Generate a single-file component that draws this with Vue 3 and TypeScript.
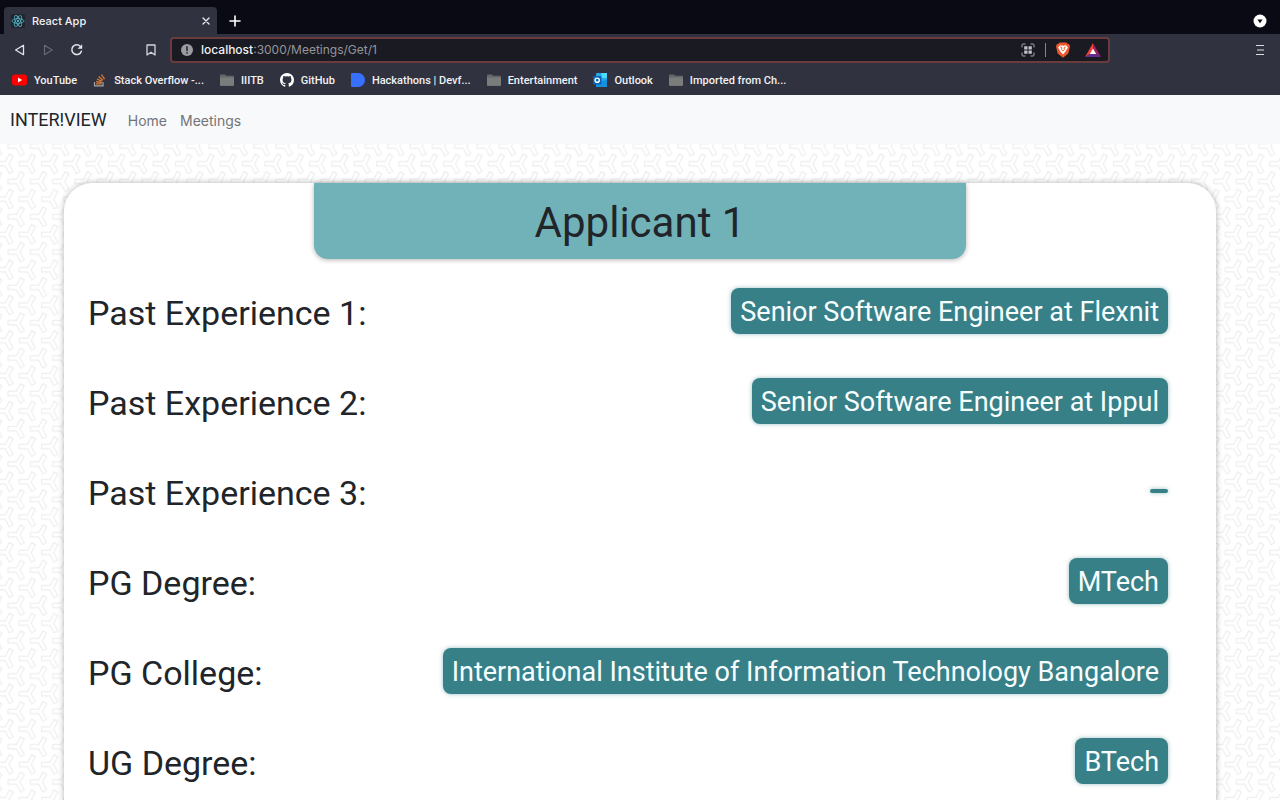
<script setup lang="ts">
interface Bookmark {
  label: string
  icon: 'youtube' | 'stack' | 'folder' | 'github' | 'devfolio' | 'outlook'
}

interface Detail {
  label: string
  value: string
}

const bookmarks: Bookmark[] = [
  { label: 'YouTube', icon: 'youtube' },
  { label: 'Stack Overflow -...', icon: 'stack' },
  { label: 'IIITB', icon: 'folder' },
  { label: 'GitHub', icon: 'github' },
  { label: 'Hackathons | Devf...', icon: 'devfolio' },
  { label: 'Entertainment', icon: 'folder' },
  { label: 'Outlook', icon: 'outlook' },
  { label: 'Imported from Ch...', icon: 'folder' },
]

const details: Detail[] = [
  { label: 'Past Experience 1:', value: 'Senior Software Engineer at Flexnit' },
  { label: 'Past Experience 2:', value: 'Senior Software Engineer at Ippul' },
  { label: 'Past Experience 3:', value: '' },
  { label: 'PG Degree:', value: 'MTech' },
  { label: 'PG College:', value: 'International Institute of Information Technology Bangalore' },
  { label: 'UG Degree:', value: 'BTech' },
]
</script>

<template>
  <div class="screen">
    <header class="browser">
      <div class="tabs">
        <div class="tab">
          <svg class="favicon" viewBox="0 0 14 14" aria-hidden="true">
            <rect width="14" height="14" rx="2" fill="#20242c" />
            <g fill="none" stroke="#4fa9bd" stroke-width="0.9">
              <ellipse cx="7" cy="7" rx="6" ry="2.4" />
              <ellipse cx="7" cy="7" rx="6" ry="2.4" transform="rotate(60 7 7)" />
              <ellipse cx="7" cy="7" rx="6" ry="2.4" transform="rotate(120 7 7)" />
            </g>
            <circle cx="7" cy="7" r="1.2" fill="#4fa9bd" />
          </svg>
          <span class="tab-title">React App</span>
          <button class="icon-button" aria-label="Close tab">
            <svg width="8" height="8" viewBox="0 0 8 8"><path d="M1 1l6 6M7 1L1 7" stroke="#e8e9ee" stroke-width="1.4" stroke-linecap="round" /></svg>
          </button>
        </div>
        <button class="icon-button" aria-label="New tab">
          <svg width="12" height="12" viewBox="0 0 12 12"><path d="M6 1v10M1 6h10" stroke="#fff" stroke-width="1.6" stroke-linecap="round" /></svg>
        </button>
        <button class="icon-button tab-search" aria-label="Search tabs">
          <svg width="14" height="14" viewBox="0 0 14 14"><circle cx="7" cy="7" r="6.5" fill="#fff" /><path d="M4.4 5.4h5.2L7 9.2z" fill="#0b0b16" /></svg>
        </button>
      </div>

      <div class="toolbar">
        <button class="icon-button" aria-label="Back">
          <svg width="12" height="12" viewBox="0 0 12 12"><path d="M9.5 1.3v9.4L1.6 6z" fill="none" stroke="#e4e5ea" stroke-width="1.3" stroke-linejoin="round" /></svg>
        </button>
        <button class="icon-button" aria-label="Forward">
          <svg width="12" height="12" viewBox="0 0 12 12"><path d="M2.5 1.3v9.4L10.2 6z" fill="none" stroke="#666975" stroke-width="1.2" stroke-linejoin="round" /></svg>
        </button>
        <button class="icon-button" aria-label="Reload">
          <svg width="14" height="14" viewBox="0 0 14 14"><path d="M10.200 3.200A4.900 4.900 0 1 0 11.400 8.200" fill="none" stroke="#e4e5ea" stroke-width="1.500" stroke-linecap="round" /><path d="M12.200 1.200v4.600H7.600z" fill="#e4e5ea" /></svg>
        </button>
        <button class="icon-button bookmark" aria-label="Bookmark this page">
          <svg width="10" height="12" viewBox="0 0 10 12"><path d="M1 1h8v10L5 8.2 1 11z" fill="none" stroke="#d4d5db" stroke-width="1.3" stroke-linejoin="round" /></svg>
        </button>
        <div class="address">
          <svg width="12" height="12" viewBox="0 0 12 12" aria-hidden="true"><circle cx="6" cy="6" r="6" fill="#9a9ca1" /><path d="M6 2.8v3.8" stroke="#1b1b22" stroke-width="1.4" stroke-linecap="round" /><circle cx="6" cy="8.9" r="0.8" fill="#1b1b22" /></svg>
          <a class="url" href="#"><b>localhost</b>:3000/Meetings/Get/1</a>
          <div class="actions">
            <button class="icon-button" aria-label="QR code">
              <svg width="14" height="14" viewBox="0 0 14 14">
                <path d="M1 4.500V2q0-1 1-1h2.500M9.500 1H12q1 0 1 1v2.500M13 9.500V12q0 1-1 1H9.500M4.500 13H2q-1 0-1-1V9.500" fill="none" stroke="#a6a7ac" />
                <path d="M3.200 3.200h3.300v3.300H3.200zM7.500 3.200h3.300v3.300H7.500zM3.200 7.500h3.300v3.300H3.200zM7.500 7.500h3.300v3.300H7.500z" fill="#c2c3c7" />
              </svg>
            </button>
            <span class="divider"></span>
            <button class="icon-button" aria-label="Brave Shields">
              <svg width="14" height="16" viewBox="0 0 14 16"><path d="M3.600.5h6.800l1.400 1.400h1.300L14 4.500l-1.700 7L7 15.700l-5.300-4.200L0 4.500l.9-2.600h1.300z" fill="#f0562b" /><path d="M4 3.200l3 .5 3-.5 1.900 2.400-2.500 4.200L7 12.500 4.600 9.800 2.100 5.600z" fill="#fff" /><path d="M4.200 5l1.700.6-.3 2.200L7 9l1.400-1.200-.3-2.200 1.700-.6" fill="none" stroke="#f0562b" stroke-width="0.900" /></svg>
            </button>
            <button class="icon-button" aria-label="Brave Rewards">
              <svg width="16" height="14" viewBox="0 0 16 14"><path d="M8 0L0 14l8-4.500z" fill="#ef4136" /><path d="M8 0l8 14-8-4.500z" fill="#9e1f63" /><path d="M0 14h16L8 9z" fill="#662d91" /><path d="M8 5.500L4.800 11h6.400z" fill="#fff" /></svg>
            </button>
          </div>
        </div>
        <button class="icon-button menu" aria-label="Menu">
          <svg width="10" height="12" viewBox="0 0 10 12"><path d="M1 1.500h8M2 6h7M1 10.500h8" stroke="#dcdde2" stroke-width="1.200" /></svg>
        </button>
      </div>

      <nav class="bookmarks" aria-label="Bookmarks">
        <a v-for="item in bookmarks" :key="item.label" class="bookmark-link" href="#">
          <svg v-if="item.icon === 'youtube'" width="15" height="14" viewBox="0 0 15 14"><rect y="1.500" width="15" height="11" rx="3" fill="#f00" /><path d="M6 4.500v5L10.200 7z" fill="#fff" /></svg>
          <svg v-else-if="item.icon === 'stack'" width="14" height="14" viewBox="0 0 14 14"><path d="M1.500 9v3.800h8.500V9" fill="none" stroke="#a5a6aa" stroke-width="1.200" /><path d="M3 10.800h5.600M3.200 8.500l5.500 1.100M4 6l5 2.400M5.700 3.500l4.200 3.700M8.400 1.500l3.200 4.600" stroke="#dc7b35" stroke-width="1.300" /></svg>
          <svg v-else-if="item.icon === 'folder'" width="14" height="14" viewBox="0 0 14 14"><path d="M0 2.500q0-1 1-1h4l1.200 1.200H13q1 0 1 1V12q0 .8-1 .8H1q-1 0-1-.8z" fill="#666768" /><path d="M0 4.500h14V12q0 .8-1 .8H1q-1 0-1-.8z" fill="#7b7c7c" /></svg>
          <svg v-else-if="item.icon === 'github'" width="14" height="14" viewBox="0 0 16 16"><path fill="#fff" d="M8 0C3.580 0 0 3.580 0 8c0 3.540 2.290 6.530 5.470 7.590.4.070.55-.17.55-.38v-1.490c-2.010.37-2.530-.49-2.690-.94-.09-.23-.48-.94-.82-1.130-.28-.15-.68-.52-.01-.53.63-.01 1.080.58 1.230.82.72 1.210 1.870.87 2.330.66.07-.52.28-.87.51-1.070-1.780-.2-3.640-.89-3.640-3.950 0-.87.31-1.590.82-2.150-.08-.2-.36-1.020.08-2.120 0 0 .67-.21 2.200.82a7.400 7.400 0 0 1 4 0c1.530-1.040 2.200-.82 2.200-.82.44 1.100.16 1.920.08 2.120.51.56.82 1.270.82 2.150 0 3.070-1.870 3.750-3.650 3.950.29.25.54.73.54 1.480v2.200c0 .21.15.46.55.38A8 8 0 0 0 16 8c0-4.420-3.580-8-8-8z" /></svg>
          <svg v-else-if="item.icon === 'devfolio'" width="14" height="14" viewBox="0 0 14 14"><path d="M1 0h6a7 7 0 0 1 0 14H1q-1 0-1-1V1q0-1 1-1z" fill="#3770ff" /></svg>
          <svg v-else width="14" height="14" viewBox="0 0 14 14"><rect x="3" width="11" height="14" rx="1" fill="#28a8ea" /><path d="M8.500 0H14v5H8.500z" fill="#50d9ff" /><path d="M3 9l11-2v6q0 1-1 1H4q-1 0-1-1z" fill="#1490df" /><rect y="3" width="8.500" height="8.500" rx="1" fill="#0364b8" /><circle cx="4.200" cy="7.200" r="2.100" fill="none" stroke="#fff" stroke-width="1.400" /></svg>
          <span>{{ item.label }}</span>
        </a>
      </nav>
    </header>

    <nav class="navbar">
      <a class="brand" href="#">INTER!VIEW</a>
      <a class="nav-link" href="#">Home</a>
      <a class="nav-link" href="#">Meetings</a>
    </nav>

    <main class="page">
      <section class="card">
        <h1 class="card-title">Applicant 1</h1>
        <dl class="details">
          <div v-for="row in details" :key="row.label" class="row">
            <dt>{{ row.label }}</dt>
            <dd :class="{ empty: !row.value }">{{ row.value }}</dd>
          </div>
        </dl>
      </section>
    </main>
  </div>
</template>

<style>
body {
  margin: 0;
}
</style>

<style scoped>
.screen {
  display: flex;
  flex-direction: column;
  height: 100vh;
  overflow: hidden;
  font-family: Roboto, "Liberation Sans", sans-serif;
  color: #212529;
  background: #fff;
}

a {
  color: inherit;
  text-decoration: none;
}

svg {
  display: block;
  flex: none;
}

.icon-button {
  display: flex;
  padding: 0;
  border: 0;
  background: none;
}

.browser {
  flex: none;
  background: #30323f;
  color: #f1f1f4;
  font-family: Inter, "Liberation Sans", sans-serif;
  font-size: 11px;
}

.tabs {
  display: flex;
  align-items: center;
  height: 27px;
  padding: 7px 13px 0 4px;
  gap: 12px;
  background: #0a0a14;
}

.tab {
  display: flex;
  align-items: center;
  box-sizing: border-box;
  width: 213px;
  height: 27px;
  padding: 0 7px;
  gap: 7px;
  border-radius: 4px 4px 0 0;
  background: #30323f;
}

.favicon {
  width: 14px;
  height: 14px;
}

.tab-title {
  flex: 1;
  font-weight: 500;
}

.tab-search {
  margin-left: auto;
}

.toolbar {
  display: flex;
  align-items: center;
  height: 31px;
  padding: 0 15px 0 14px;
  gap: 16px;
}

.bookmark {
  margin-left: 46px;
}

.address {
  display: flex;
  align-items: center;
  box-sizing: border-box;
  flex: 0 1 940px;
  height: 26px;
  margin-left: -2px;
  padding: 0 7px 0 9px;
  gap: 8px;
  border: 2px solid #6a3b3d;
  border-radius: 4px;
  background: #191a22;
  font-size: 12px;
}

.url {
  flex: 1;
  color: #95969b;
}

.url b {
  font-weight: 500;
  color: #f1f1f4;
}

.actions {
  display: flex;
  align-items: center;
  gap: 10px;
}

.divider {
  width: 1px;
  height: 14px;
  background: #85868b;
}

.actions .icon-button:last-child {
  margin-left: 5px;
}

.menu {
  margin-left: auto;
}

.bookmarks {
  display: flex;
  align-items: center;
  height: 30px;
  padding: 0 12px;
  gap: 16px;
  font-family: Roboto, "Liberation Sans", sans-serif;
  font-weight: 500;
}

.bookmark-link {
  display: flex;
  align-items: center;
  gap: 7px;
  white-space: nowrap;
}

.navbar {
  display: flex;
  align-items: center;
  flex: none;
  height: 49px;
  padding: 0 10px;
  background: #f8f9fb;
}

.brand {
  margin-right: 14px;
  font-size: 18px;
}

.nav-link {
  padding: 2px 7px 0;
  font-family: Inter, "Liberation Sans", sans-serif;
  font-size: 14px;
  color: #737477;
}

.nav-link + .nav-link {
  padding-left: 6px;
}

.page {
  flex: 1;
  min-height: 0;
  padding: 39px 5% 0;
  background-image: url("data:image/svg+xml,%3Csvg xmlns='http://www.w3.org/2000/svg' width='67' height='106'%3E%3Cdefs%3E%3Cpattern id='p' width='22.333' height='35.333' patternUnits='userSpaceOnUse'%3E%3Cg fill='none' stroke='%23eeeeee' stroke-width='1.2' stroke-linejoin='round'%3E%3Cpath id='y' d='M1 9.300h8.500l4-7.700 3.800 2.200-4.300 7.700 4.300 7.700-3.800 2.200-4-7.700H1z'/%3E%3Cuse href='%23y' x='11.167' y='17.667'/%3E%3Cuse href='%23y' x='-11.167' y='17.667'/%3E%3Cuse href='%23y' x='11.167' y='-17.667'/%3E%3Cuse href='%23y' x='-11.167' y='-17.667'/%3E%3C/g%3E%3C/pattern%3E%3C/defs%3E%3Crect width='67' height='106' fill='url(%23p)'/%3E%3C/svg%3E");
  background-size: 67px 106px;
  background-position: 7px 26px;
}

.card {
  min-height: 100%;
  border-radius: 28px 28px 0 0;
  background: #fff;
  box-shadow: 0 0 6px rgba(0, 0, 0, 0.3);
}

.card-title {
  box-sizing: border-box;
  width: 652px;
  max-width: 80%;
  margin: 0 auto;
  padding: 14px 0 10px;
  border-radius: 0 0 14px 14px;
  background: #71b2b8;
  box-shadow: 0 1px 5px rgba(0, 0, 0, 0.3);
  font-size: 42px;
  font-weight: 400;
  line-height: 52px;
  text-align: center;
}

.details {
  margin: 0;
  padding: 7px 48px 0 24px;
}

.row {
  display: flex;
  align-items: center;
  justify-content: space-between;
  height: 90px;
}

dt {
  padding-top: 4px;
  font-size: 34px;
}

dd {
  margin: 0;
  padding: 6px 9px 4px;
  border-radius: 8px;
  background: #388087;
  box-shadow: 0 0 4px rgba(56, 128, 135, 0.5);
  font-size: 27px;
  line-height: 36px;
  color: #f6feff;
  white-space: nowrap;
}

dd.empty {
  height: 4px;
  padding: 0 9px;
  border-radius: 2px;
}
</style>
